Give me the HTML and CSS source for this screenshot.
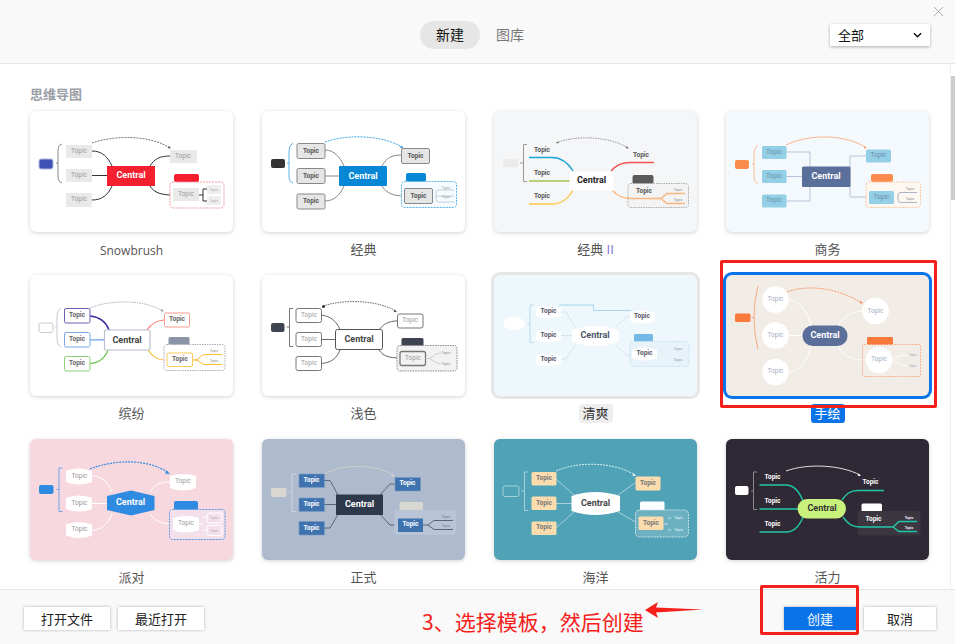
FILE: index.html
```html
<!DOCTYPE html>
<html lang="zh-CN">
<head>
    <meta charset="UTF-8">
    <title>新建</title>
    <link rel="stylesheet" href="styles.css">
</head>
<body>
<div class="dialog">
    <header class="top-bar">
        <div class="tabs">
            <span class="tab tab-active">新建</span>
            <span class="tab">图库</span>
        </div>
        <div class="filter">全部
            <svg class="chevron" viewBox="0 0 10 6"><path d="M1 1l4 4 4-4" fill="none" stroke="#111" stroke-width="1.6"/></svg>
        </div>
        <svg class="close" viewBox="0 0 9 9"><path d="M0 0l9 9M9 0l-9 9" stroke="#aaa" stroke-width="1"/></svg>
    </header>

    <main class="body">
        <div class="gallery">
            <h2 class="section-title">思维导图</h2>
            <div class="grid">

                <!-- Snowbrush -->
                <div class="item">
                    <div class="card">
                        <svg viewBox="0 0 203 121">
                            <rect x="9" y="48" width="14" height="10" rx="2" fill="#3f51b5" stroke="#b5bde6"/>
                            <path d="M32 33Q28 34 28 40V65Q28 71 32 72M28 52H26" fill="none" stroke="#888"/>
                            <path d="M62 40C72 40 78 46 82 55M62 64.5H77M62 89C72 89 78 84 82 75M120 55C124 48 130 45 140 45M120 75C124 82 132 84 143 84" fill="none" stroke="#333"/>
                            <path d="M62 32C85 24 120 24 140 37" fill="none" stroke="#777" stroke-dasharray="2 1"/>
                            <path d="M141 37.5l-3.500-.5 1.500-2z" fill="#555"/>
                            <g fill="#e9e9e9"><rect x="36" y="34" width="26" height="13"/><rect x="36" y="58" width="26" height="13"/><rect x="36" y="82" width="26" height="14"/><rect x="140" y="39" width="27" height="13"/></g>
                            <rect x="144" y="63" width="25" height="8" rx="2" fill="#f5202f"/>
                            <rect x="140" y="71" width="54" height="26" rx="3" fill="#fff" stroke="#f59aa3" stroke-dasharray="2 1"/>
                            <rect x="143" y="77" width="26" height="13" fill="#e9e9e9"/>
                            <path d="M169 84H173M173 78V90M173 78H177M173 90H177" fill="none" stroke="#333"/>
                            <g fill="#efefef"><rect x="177" y="74" width="14" height="9"/><rect x="177" y="85" width="14" height="9"/></g>
                            <rect x="77" y="55" width="48" height="20" fill="#f5202f"/>
                            <g class="topic" fill="#999"><text x="49" y="40.5">Topic</text><text x="49" y="65">Topic</text><text x="49" y="89">Topic</text><text x="153" y="46">Topic</text><text x="156" y="84">Topic</text></g>
                            <g class="sub" fill="#aaa"><text x="184" y="79">Topic</text><text x="184" y="90">Topic</text></g>
                            <text class="central" x="101" y="65" fill="#fff">Central</text>
                        </svg>
                    </div>
                    <div class="name name-latin"><span>Snowbrush</span></div>
                </div>

                <!-- classic -->
                <div class="item">
                    <div class="card">
                        <svg viewBox="0 0 203 121">
                            <rect x="9" y="48" width="14" height="9" rx="2" fill="#333"/>
                            <path d="M31 32Q27 34 27 40V65Q27 71 31 72M27 52H25" fill="none" stroke="#5ab4e8"/>
                            <path d="M63 39C72 39 78 46 82 55M63 65H77M63 90C72 90 78 84 82 75M120 55C124 47 130 44 139 44M120 75C124 82 132 85 142 85M170 85H174" fill="none" stroke="#888"/>
                            <path d="M63 31C85 23 120 24 140 36" fill="none" stroke="#3fa9e6" stroke-dasharray="2 1"/>
                            <path d="M141.500 37l-3.500-.2 1.200-2.300z" fill="#1f8fd6"/>
                            <g fill="#e6e6e6" stroke="#888"><rect x="35" y="32.5" width="28" height="15" rx="1.5"/><rect x="35" y="57.5" width="28" height="15" rx="1.5"/><rect x="35" y="83" width="28" height="15" rx="1.5"/><rect x="139.5" y="37.5" width="28" height="15" rx="1.5"/></g>
                            <rect x="144" y="62" width="20" height="9" rx="2" fill="#0787d5"/>
                            <rect x="139.5" y="70.5" width="55" height="26" rx="3" fill="#f5fbff" stroke="#5ab4e8" stroke-dasharray="2 1"/>
                            <rect x="142.5" y="77.5" width="28" height="15" rx="1.5" fill="#e6e6e6" stroke="#888"/>
                            <path d="M192 79H177Q174 79 174 82V88Q174 91 177 91H192M192 85H177Q174 85 174 87" fill="none" stroke="#c5ccd5"/>
                            <rect x="77" y="55" width="48" height="20" rx="1" fill="#0787d5"/>
                            <g class="topic bold" fill="#555"><text x="49" y="40.5">Topic</text><text x="49" y="65.5">Topic</text><text x="49" y="91">Topic</text><text x="153.5" y="45.5">Topic</text><text x="156.5" y="85.5">Topic</text></g>
                            <g class="sub" fill="#999"><text x="184" y="77">Topic</text><text x="184" y="86">Topic</text></g>
                            <text class="central" x="101" y="66" fill="#fff">Central</text>
                        </svg>
                    </div>
                    <div class="name"><span>经典</span></div>
                </div>

                <!-- classic II -->
                <div class="item">
                    <div class="card card-grey">
                        <svg viewBox="0 0 203 121">
                            <rect x="9" y="48" width="15" height="8" rx="1" fill="#ebebeb"/>
                            <path d="M33 33.5H29.5V70.5H33M29.5 52H26" fill="none" stroke="#999"/>
                            <path d="M62 32C82 24 115 25 134 37" fill="none" stroke="#999" stroke-dasharray="1.500 1"/>
                            <path d="M135 37.500l-3.500-.3 1.200-2.200zM62 32l2.500-1.800.3 2z" fill="#777"/>
                            <path d="M35 46.5H58C68 46.5 74 52 79 60" fill="none" stroke="#1ba7d6" stroke-width="1.4"/>
                            <path d="M35 70H76" fill="none" stroke="#9dc44d" stroke-width="1.4"/>
                            <path d="M35 93H58C68 93 74 88 79 79" fill="none" stroke="#fbc84a" stroke-width="1.4"/>
                            <path d="M117 60C122 54 128 51.5 136 51.5H160" fill="none" stroke="#f3514f" stroke-width="1.4"/>
                            <rect x="138.5" y="64" width="21" height="9" rx="2" fill="#5a5a5a"/>
                            <rect x="134" y="72.5" width="60.5" height="24" rx="3" fill="#f3f3f3" stroke="#aaa" stroke-dasharray="1.500 1"/>
                            <path d="M118 79C124 86 130 87.5 138 87.5H167L173 82.5H191M167 87.5L173 92.5H191" fill="none" stroke="#fbb67c" stroke-width="1.4"/>
                            <rect x="75.5" y="60.5" width="44" height="19" fill="#fff"/>
                            <g class="topic bold" fill="#555"><text x="48" y="40">Topic</text><text x="48" y="63">Topic</text><text x="48" y="86">Topic</text><text x="147" y="45">Topic</text><text x="150" y="81">Topic</text></g>
                            <g class="sub" fill="#888"><text x="184" y="79">Topic</text><text x="184" y="89">Topic</text></g>
                            <text class="central" x="97.5" y="70" fill="#222">Central</text>
                        </svg>
                    </div>
                    <div class="name"><span>经典 <i class="two">II</i></span></div>
                </div>

                <!-- business -->
                <div class="item">
                    <div class="card card-ice">
                        <svg viewBox="0 0 203 121">
                            <rect x="9" y="49" width="14" height="9" rx="2" fill="#fa8b4c"/>
                            <path d="M32 34Q28 36 28 42V66Q28 71 32 73M28 53H26" fill="none" stroke="#fbbd95"/>
                            <path d="M60 41H84V56M60 65.5H76M60 90H84V76M124 65V45H140M124 65V86H143M168 86H172" fill="none" stroke="#b8c3d8"/>
                            <path d="M60 34C85 22 120 24 139 36" fill="none" stroke="#fbb48e"/>
                            <circle cx="139" cy="36.500" r="1" fill="#fa8b4c"/>
                            <g fill="#93d0e8"><rect x="36" y="35" width="24.5" height="13" rx="1.5"/><rect x="36" y="59" width="24.5" height="13" rx="1.5"/><rect x="36" y="83.5" width="24.5" height="13" rx="1.5"/><rect x="140" y="38.5" width="25" height="13" rx="1.5"/></g>
                            <rect x="145" y="63" width="22" height="8" rx="2" fill="#fa8b4c"/>
                            <rect x="140" y="71" width="54.5" height="25.5" rx="3" fill="#fdf7f2" stroke="#fbc9a9" stroke-dasharray="2 1"/>
                            <rect x="143" y="80" width="25" height="13" rx="1.5" fill="#93d0e8"/>
                            <path d="M191 81.5H175Q172 81.5 172 84V89Q172 91.5 175 91.5H191" fill="none" stroke="#aab4c6"/>
                            <rect x="76" y="55.5" width="48.5" height="20.5" rx="1.5" fill="#5a6f99"/>
                            <g class="topic" fill="#6d8ba5"><text x="48" y="41.5">Topic</text><text x="48" y="65.5">Topic</text><text x="48" y="90">Topic</text><text x="152.5" y="45">Topic</text><text x="155.5" y="86.5">Topic</text></g>
                            <g class="sub" fill="#888"><text x="184" y="78">Topic</text><text x="184" y="88">Topic</text></g>
                            <text class="central" x="100" y="66" fill="#fff">Central</text>
                        </svg>
                    </div>
                    <div class="name"><span>商务</span></div>
                </div>

                <!-- colourful -->
                <div class="item">
                    <div class="card">
                        <svg viewBox="0 0 203 121">
                            <rect x="9" y="48" width="14" height="9.5" rx="2" fill="#fff" stroke="#c5cad5"/>
                            <path d="M31 33Q27 35 27 41V65Q27 70 31 72M27 52H25" fill="none" stroke="#c5cad5"/>
                            <path d="M60 41C70 42 76 47 79 55" fill="none" stroke="#3a2f9c" stroke-width="1.5"/>
                            <path d="M60 64.8H75" fill="none" stroke="#6ea2ea" stroke-width="1.2"/>
                            <path d="M60 88.5C70 88 75 83 78 75" fill="none" stroke="#6cc551" stroke-width="1.2"/>
                            <path d="M117 55C121 49 126 45.5 134 45" fill="none" stroke="#fb7c70" stroke-width="1.2"/>
                            <path d="M118 75C122 81 127 85 135 85" fill="none" stroke="#fbbd2e" stroke-width="1.2"/>
                            <path d="M60 33C82 24 115 25 133 36" fill="none" stroke="#aab1c0" stroke-dasharray="1.500 1"/>
                            <path d="M134 36.500l-3.500-.3 1.200-2.200z" fill="#8c94a6"/>
                            <g fill="#fff"><rect x="34.5" y="33.5" width="25.5" height="14.5" rx="1.5" stroke="#6b5fb5"/><rect x="34.5" y="57.5" width="25.5" height="14.5" rx="1.5" stroke="#7faae8"/><rect x="34.5" y="81.5" width="25.5" height="14.5" rx="1.5" stroke="#8fd07c"/><rect x="134.5" y="38" width="25" height="14" rx="1.5" stroke="#fb9a90"/></g>
                            <rect x="138.5" y="62" width="21" height="8" rx="1.5" fill="#8a94a6"/>
                            <rect x="134" y="69.5" width="61" height="26" rx="3" fill="#fff" stroke="#aab" stroke-dasharray="1.500 1"/>
                            <rect x="137" y="78" width="25.5" height="13.5" rx="1.5" fill="#fff" stroke="#fbc95a"/>
                            <path d="M162.5 85H165C170 85 170 79.5 175 79.5H192M165 85C170 85 170 89.5 175 89.5H192" fill="none" stroke="#fbbd2e"/>
                            <rect x="74.5" y="55" width="45.5" height="20" rx="1.5" fill="#fff" stroke="#b9c0cf" stroke-width="1.2"/>
                            <g class="topic bold" fill="#666"><text x="47" y="41">Topic</text><text x="47" y="65">Topic</text><text x="47" y="89">Topic</text><text x="147" y="45">Topic</text><text x="150" y="85">Topic</text></g>
                            <g class="sub" fill="#888"><text x="184" y="76">Topic</text><text x="184" y="86">Topic</text></g>
                            <text class="central" x="97" y="65.5" fill="#444">Central</text>
                        </svg>
                    </div>
                    <div class="name"><span>缤纷</span></div>
                </div>

                <!-- light -->
                <div class="item">
                    <div class="card">
                        <svg viewBox="0 0 203 121">
                            <rect x="9" y="48" width="13.5" height="9" rx="2" fill="#3f4550"/>
                            <path d="M31 33.5H27.5V71.5H31M27.5 52H24.5" fill="none" stroke="#777"/>
                            <path d="M59 40C68 41 75 46 78 55M59 64.5H73M59 88.5C69 88 75 83 78 75M117 55C121 49 127 46 135 46M117 75C121 81 127 83 138 83" fill="none" stroke="#666"/>
                            <path d="M61 31C82 24 115 25 134 36" fill="none" stroke="#666" stroke-dasharray="1.500 1"/>
                            <path d="M135 37l-3.500-.3 1.200-2.200z" fill="#444"/>
                            <circle cx="61.5" cy="31.5" r="1.5" fill="#333"/>
                            <g fill="#fff" stroke="#777"><rect x="34" y="33.5" width="25.5" height="14" rx="2"/><rect x="34" y="57.5" width="25.5" height="14" rx="2"/><rect x="34" y="81.5" width="25.5" height="14" rx="2"/><rect x="135.5" y="39" width="25.5" height="14" rx="2"/></g>
                            <rect x="139.5" y="63" width="22" height="8" rx="1.5" fill="#3f4550"/>
                            <rect x="135" y="70.5" width="60" height="25.5" rx="3" fill="#f2f2f2" stroke="#888" stroke-dasharray="1.500 1"/>
                            <rect x="138" y="76.5" width="25.5" height="14" rx="2" fill="#f2f2f2" stroke="#777" stroke-width="1.3"/>
                            <path d="M163.5 83.5H166C170 83.5 172 78 179 78M166 83.5C170 83.5 172 88.5 179 88.5" fill="none" stroke="#ccc"/>
                            <rect x="73.5" y="54.5" width="47" height="20" rx="2" fill="#fff" stroke="#555"/>
                            <g class="topic" fill="#999"><text x="47" y="41">Topic</text><text x="47" y="65">Topic</text><text x="47" y="88.5">Topic</text><text x="148" y="46">Topic</text><text x="151" y="84">Topic</text></g>
                            <g class="sub" fill="#888"><text x="184" y="78">Topic</text><text x="184" y="89">Topic</text></g>
                            <text class="central" x="97" y="65" fill="#444">Central</text>
                        </svg>
                    </div>
                    <div class="name"><span>浅色</span></div>
                </div>

                <!-- fresh -->
                <div class="item">
                    <div class="card card-hover">
                        <svg viewBox="0 0 203 121">
                            <ellipse cx="20" cy="48.5" rx="11" ry="6.5" fill="#fff"/>
                            <path d="M40 30H36V67.5H40M36 48.5H33.5" fill="none" stroke="#b5dcf0"/>
                            <path d="M66 37H72L81 52M66 60.5H78M66 84H72L81 70M122 52L132 42H136M122 70L132 80H139M162 79L178 73.5M162 79L178 84.5" fill="none" stroke="#d4e6ec"/>
                            <path d="M65 30H99.5V35.5H137" fill="none" stroke="#a9d6ef"/>
                            <g fill="#fff"><path d="M42 33Q54 28 67 33V41Q54 46 42 41Z"/><path d="M42 57Q54 52 67 57V65Q54 70 42 65Z"/><path d="M42 80.5Q54 75.5 67 80.5V88.5Q54 93.5 42 88.5Z"/><path d="M136 38Q148 33 160.5 38V46Q148 51 136 46Z"/></g>
                            <rect x="140" y="59" width="19" height="8" rx="1.5" fill="#74b9e6"/>
                            <rect x="136" y="66.5" width="59" height="25" rx="3" fill="#e8f3f9" stroke="#c5e3f2" stroke-dasharray="2 1"/>
                            <path d="M138 75Q150 70 163 75V83Q150 88 138 83Z" fill="#fff"/>
                            <path d="M78 55Q101 47 124.5 55V67Q101 75 78 67Z" fill="#fff"/>
                            <g class="topic bold" fill="#556"><text x="54.5" y="37">Topic</text><text x="54.5" y="60.5">Topic</text><text x="54.5" y="84.5">Topic</text><text x="148" y="42">Topic</text><text x="150.5" y="79">Topic</text></g>
                            <g class="sub" fill="#8a9aa8"><text x="184" y="74">Topic</text><text x="184" y="85">Topic</text></g>
                            <text class="central" x="101" y="61" fill="#4a5568">Central</text>
                        </svg>
                    </div>
                    <div class="name"><span class="label-hover">清爽</span></div>
                </div>

                <!-- hand drawn, selected -->
                <div class="item">
                    <div class="card card-selected">
                        <svg viewBox="0 0 203 121">
                            <rect x="9" y="38.5" width="15.5" height="8.5" rx="1.5" fill="#fa7a3c"/>
                            <path d="M32 11Q28 25 28 42Q28 60 32 74M28 42.5H25.5" fill="none" stroke="#f9ab82"/>
                            <g fill="none" stroke="#fff"><path d="M60 25C72 25 82 35 85 51M60 60.5H76M60 97C74 97 82 85 85 71M112 51C116 42 126 36 138 36M112 71C116 79 122 85 140 85M166 85C170 82 175 80 184 80M166 85C170 88 175 91 184 91"/></g>
                            <path d="M61 17C85 8 115 15 136 28" fill="none" stroke="#fa9a6a" stroke-dasharray="2 1"/>
                            <path d="M137 28.500l-3.500-.5 1.300-2z" fill="#fa7a3c"/>
                            <g fill="#fff"><circle cx="49.5" cy="24.5" r="13.3"/><circle cx="49.5" cy="60.5" r="13.3"/><circle cx="49.5" cy="97" r="13.3"/><circle cx="149.5" cy="36" r="13.3"/></g>
                            <rect x="141" y="62" width="26" height="8" rx="1" fill="#fa7a3c"/>
                            <rect x="136.5" y="69.5" width="58" height="32" rx="1.5" fill="none" stroke="#fbb48e" stroke-dasharray="2 1"/>
                            <circle cx="153" cy="85" r="13.3" fill="#fff"/>
                            <rect x="76.5" y="50.5" width="45" height="20.5" rx="10" fill="#5a6f99"/>
                            <g class="topic" fill="#a3adc2"><text x="49.5" y="24.5">Topic</text><text x="49.5" y="60.5">Topic</text><text x="49.5" y="97">Topic</text><text x="149.5" y="36.5">Topic</text><text x="153" y="85">Topic</text></g>
                            <g class="sub" fill="#a3adc2"><text x="186.5" y="80">Topic</text><text x="186.5" y="91">Topic</text></g>
                            <text class="central" x="99" y="61" fill="#fff">Central</text>
                        </svg>
                    </div>
                    <div class="name"><span class="label-selected">手绘</span></div>
                </div>

                <!-- party -->
                <div class="item">
                    <div class="card card-pink">
                        <svg viewBox="0 0 203 121">
                            <rect x="9" y="46" width="14.5" height="9" rx="2" fill="#2f8ae2"/>
                            <path d="M32.5 29H29V72.5H32.5M29 50.5H26.5" fill="none" stroke="#6fa4e4"/>
                            <g fill="none" stroke="#fff"><path d="M62 37C72 37 78 43 82 53M62 64.5H78M62 91C72 91 78 85 82 75M120 53C124 46 130 43 140 43M120 75C124 81 130 85 143 85M169 85H173M173 78V91"/></g>
                            <path d="M60 30C85 20 118 20 137 33" fill="none" stroke="#2f8ae2" stroke-width="1.2" stroke-dasharray="2 1"/>
                            <path d="M140 35l-5-.6 1.800-3z" fill="#2f8ae2"/>
                            <g fill="#fff"><path d="M36 32Q49 27 62 32V43Q49 48 36 43Z"/><path d="M36 59Q49 54 62 59V70Q49 75 36 70Z"/><path d="M36 85.5Q49 80.5 62 85.5V96.5Q49 101.5 36 96.5Z"/><path d="M140 37Q153 33 166 37V49Q153 54 140 49Z"/></g>
                            <rect x="144" y="62" width="24" height="9" rx="2" fill="#2f8ae2"/>
                            <rect x="139.5" y="70.5" width="55.5" height="30" rx="3" fill="#f4e0ea" stroke="#5b96e0" stroke-dasharray="2 1"/>
                            <path d="M143 79Q156 75 169 79V91Q156 96 143 91Z" fill="#fff"/>
                            <g fill="none" stroke="#fff"><path d="M169 85H173M173 78H177M173 91H177"/><rect x="177" y="74" width="15" height="10" rx="2"/><rect x="177" y="86.5" width="15" height="10" rx="2"/></g>
                            <path d="M77 57L101 51.5L124.5 57V71L101 76.5L77 71Z" fill="#2f8ae2"/>
                            <g class="topic" fill="#999"><text x="49.5" y="37.5">Topic</text><text x="49.5" y="64.5">Topic</text><text x="49.5" y="91">Topic</text><text x="153" y="43">Topic</text><text x="156" y="85">Topic</text></g>
                            <g class="sub" fill="#aaa"><text x="184" y="79">Topic</text><text x="184" y="91.5">Topic</text></g>
                            <text class="central" x="100.5" y="64" fill="#fff">Central</text>
                        </svg>
                    </div>
                    <div class="name"><span>派对</span></div>
                </div>

                <!-- formal -->
                <div class="item">
                    <div class="card card-slate">
                        <svg viewBox="0 0 203 121">
                            <rect x="9" y="49" width="15.5" height="9" rx="2" fill="#d8d8d0"/>
                            <path d="M34 35H30V72.5H34M30 53H27.5" fill="none" stroke="#cfd5df"/>
                            <g fill="none" stroke="#5a6678"><path d="M62 41.5H68L76 56M62 65.5H74M62 89H68L76 75.5M118 56L128 45H133M118 75.5L128 86H136"/></g>
                            <path d="M62 35C82 24 115 25 132 37" fill="none" stroke="#cfcfc8"/>
                            <path d="M133 37.500l-3.500-.3 1.200-2.200z" fill="#d8d8d0"/>
                            <g fill="#3f73b0" stroke="#7d99bf" stroke-width=".5"><rect x="37" y="35" width="25.5" height="13.5"/><rect x="37" y="59" width="25.5" height="13.5"/><rect x="37" y="82.5" width="25.5" height="13.5"/><rect x="133" y="38.5" width="25.5" height="13.5"/></g>
                            <rect x="137.5" y="63" width="23.5" height="8.5" rx="1.5" fill="#d8d8d0"/>
                            <rect x="132.5" y="71" width="61.5" height="25" rx="3" fill="#b9c4d6"/>
                            <rect x="136" y="79.5" width="25" height="13.5" fill="#3f73b0"/>
                            <path d="M161 86H166L172 81.5H191M166 86L172 90.5H191" fill="none" stroke="#5a6678"/>
                            <rect x="74" y="55.5" width="47" height="20.5" fill="#2e3a4c"/>
                            <g class="topic bold" fill="#fff"><text x="49.5" y="42">Topic</text><text x="49.5" y="65.5">Topic</text><text x="49.5" y="89.5">Topic</text><text x="145.5" y="45">Topic</text><text x="148.5" y="86">Topic</text></g>
                            <g class="sub" fill="#6b7688"><text x="184" y="77.5">Topic</text><text x="184" y="86.5">Topic</text></g>
                            <text class="central" x="97.5" y="66" fill="#fff">Central</text>
                        </svg>
                    </div>
                    <div class="name"><span>正式</span></div>
                </div>

                <!-- ocean -->
                <div class="item">
                    <div class="card card-teal">
                        <svg viewBox="0 0 203 121">
                            <rect x="9" y="47" width="16" height="10.5" rx="2" fill="none" stroke="#a7d0da"/>
                            <path d="M34 33H30.5V71.5H34M30.5 52H27.5" fill="none" stroke="#a7d0da"/>
                            <g fill="none" stroke="#a7d0da"><path d="M62 40L80 56M62 64.5H78M62 89L80 73M124 56L141 44M124 73L145 85M170 85H174M174 79V90"/></g>
                            <path d="M62 32C85 22 120 23 141 36" fill="none" stroke="#d9eef3" stroke-dasharray="2 1"/>
                            <path d="M142 37l-3.500-.3 1.200-2.200z" fill="#fff"/>
                            <g fill="#fbdcae"><rect x="37.5" y="33" width="25" height="13.5" rx="1.5"/><rect x="37.5" y="57.5" width="25" height="13.5" rx="1.5"/><rect x="37.5" y="82.5" width="25" height="13.5" rx="1.5"/><rect x="141.5" y="37.5" width="25" height="14" rx="1.5"/></g>
                            <rect x="146" y="62.5" width="24.5" height="9" rx="1.5" fill="#fff"/>
                            <rect x="141.5" y="71" width="53" height="27" rx="4" fill="#6db1c1" stroke="#c7e3ea" stroke-dasharray="2 1"/>
                            <rect x="144.5" y="77.5" width="25" height="13.5" rx="1.5" fill="#fbdcae"/>
                            <path d="M169.5 85H174M174 80Q174 79 177 79M174 90Q174 91 177 91" fill="none" stroke="#c7e3ea"/>
                            <path d="M77.5 57Q101 49 126 57V72Q101 80 77.5 72Z" fill="#fff"/>
                            <g class="topic bold" fill="#777"><text x="50" y="40">Topic</text><text x="50" y="64.5">Topic</text><text x="50" y="89">Topic</text><text x="154" y="44.5">Topic</text><text x="157" y="84.5">Topic</text></g>
                            <g class="sub" fill="#e8f6f8"><text x="184.5" y="79">Topic</text><text x="184.5" y="90.5">Topic</text></g>
                            <text class="central" x="101.5" y="65" fill="#444">Central</text>
                        </svg>
                    </div>
                    <div class="name"><span>海洋</span></div>
                </div>

                <!-- vitality -->
                <div class="item">
                    <div class="card card-dark">
                        <svg viewBox="0 0 203 121">
                            <rect x="9" y="47" width="13.5" height="9" rx="2" fill="#fff"/>
                            <path d="M31 33H27.5V70.5H31M27.5 52H25" fill="none" stroke="#888"/>
                            <path d="M60 32C82 24 115 26 134 36" fill="none" stroke="#ddd"/>
                            <path d="M135 37l-3.500-.3 1.200-2.200z" fill="#fff"/>
                            <rect x="135.5" y="64.5" width="20.5" height="8" rx="1.5" fill="#fff"/>
                            <rect x="131.5" y="72" width="63" height="24.5" rx="3" fill="#3b3640"/>
                            <g fill="none" stroke="#1fc7a8" stroke-width="1.4"><path d="M33.5 46H60C68 46 73 52 77 62M33.5 70H72M33.5 93H60C68 93 73 88 77 78M116 61C120 55 124 51.5 132 51.5H158M117 78C122 85 126 88 134 88H167L173 82.5H191M167 88L173 92.5H191"/></g>
                            <rect x="71.5" y="60" width="48.5" height="19.5" rx="9.7" fill="#c9f27c"/>
                            <g class="topic bold" fill="#fff"><text x="46.5" y="39">Topic</text><text x="46.5" y="63">Topic</text><text x="46.5" y="86">Topic</text><text x="144.5" y="44">Topic</text><text x="147.5" y="81">Topic</text></g>
                            <g class="sub bold" fill="#eee"><text x="183" y="78.5">Topic</text><text x="183" y="88.5">Topic</text></g>
                            <text class="central" x="96" y="69.5" fill="#333">Central</text>
                        </svg>
                    </div>
                    <div class="name"><span>活力</span></div>
                </div>

            </div>
        </div>
        <div class="scrollbar"><div class="thumb"></div></div>
    </main>

    <footer class="bottom-bar">
        <div class="actions">
            <button class="btn">打开文件</button>
            <button class="btn">最近打开</button>
        </div>
        <div class="actions actions-right">
            <button class="btn btn-primary">创建</button>
            <button class="btn">取消</button>
        </div>
    </footer>

    <!-- red marks drawn over the screenshot -->
    <div class="mark mark-card"></div>
    <div class="mark mark-create"></div>
    <div class="mark-text">3、选择模板，然后创建</div>
    <svg class="mark-arrow" viewBox="0 0 58 18"><path d="M0 9L13 1L11 6.5L58 8.5L11 11.5L13 17Z" fill="#f5201a"/></svg>
</div>
</body>
</html>
```

FILE: styles.css
```css
* {box-sizing: border-box;}
html, body {margin: 0; padding: 0;}
body {font-family: "Open Sans", "Noto Sans CJK SC", sans-serif; background: #fff;}

.dialog {position: relative; width: 955px; height: 644px; display: flex; flex-direction: column; overflow: hidden;}

.top-bar {position: relative; height: 64px; flex: none; padding-top: 21px; background: #f9f9f9; border-bottom: 1px solid #e6e6e6;}
.tabs {display: flex; padding-left: 420px;}
.tab {height: 28px; line-height: 27px; width: 60px; text-align: center; font-size: 14px; color: #777; border-radius: 14px; font-family: "Noto Sans CJK SC", sans-serif;}
.tab-active {background: #e6e6e6; color: #111;}
.filter {position: absolute; left: 830px; top: 24px; width: 100px; height: 22px; line-height: 21px; padding-left: 8px; font-size: 13px; color: #111; background: #fff; box-shadow: 0 1px 3px rgba(0,0,0,.3); font-family: "Noto Sans CJK SC", sans-serif;}
.chevron {position: absolute; right: 8px; top: 8px; width: 9px; height: 6px;}
.close {position: absolute; left: 934px; top: 7px; width: 9px; height: 9px;}

.body {flex: 1; display: flex; min-height: 0; overflow: hidden;}
.gallery {flex: 1; padding: 22px 0 0 30px;}
.section-title {margin: 0 0 9px; font-size: 13px; line-height: 16px; font-weight: 700; color: #9a9ea6; font-family: "Noto Sans CJK SC", sans-serif;}
.grid {display: grid; grid-template-columns: repeat(4, 203px); column-gap: 29px; grid-auto-rows: 164px;}

.card {width: 203px; height: 121px; background: #fff; border-radius: 6px; box-shadow: 0 1px 4px rgba(0,0,0,.18); overflow: hidden;}
.card svg {display: block; width: 203px; height: 121px;}
.card-grey {background: #f5f6f8;}
.card-ice {background: #f4f9fd;}
.card-hover {background: #eef7fb; box-shadow: 0 0 0 3px #e6e6e6;}
.card-selected {background: #f1ece6; box-shadow: 0 0 0 3px #0b73e8;}
.card-pink {background: #f8d8df;}
.card-slate {background: #aebacd;}
.card-teal {background: #50a3b6;}
.card-dark {background: #2f2935;}

.topic text, .sub text, .central {text-anchor: middle; dominant-baseline: central; font-family: Roboto, sans-serif;}
.topic text, .central {transform: translateY(-.7px);}
.topic text {font-size: 6.5px;}
.topic.bold text {font-weight: 700;}
.sub text {font-size: 3.5px;}
.sub.bold text {font-weight: 700;}
.central {font-size: 9px; font-weight: 700;}

.name {height: 43px; padding-top: 8px; text-align: center; font-size: 13px; line-height: 19px; color: #555;}
.name-latin {font-size: 12px; padding-top: 9px;}
.name span {display: inline-block; min-width: 34px; height: 19px; border-radius: 3px;}
.two {font-style: normal; color: #7a70c8;}
.label-hover {background: #eee; color: #333;}
.label-selected {background: #0b73e8; color: #fff;}

.scrollbar {position: relative; width: 5px; flex: none; padding-top: 12px; background: #fff; border-left: 1px solid #eee;}
.thumb {height: 124px; background: #cdcdcd;}

.bottom-bar {height: 55px; flex: none; display: flex; justify-content: space-between; padding: 17px 19px 0 24px; background: #f9f9f9; border-top: 1px solid #e6e6e6;}
.actions {display: flex; gap: 8px;}
.btn {height: 23px; width: 86px; padding: 0; border: none; background: #fff; color: #222; font-size: 13px; font-family: "Noto Sans CJK SC", sans-serif; box-shadow: 0 0 3px rgba(0,0,0,.28);}
.actions-right .btn {width: 72px;}
.btn-primary {background: #0b73e8; color: #fff;}

.mark {position: absolute; border: 3px solid #f5201a; border-radius: 2px;}
.mark-card {left: 720px; top: 260px; width: 217px; height: 148px;}
.mark-create {left: 760px; top: 585px; width: 99px; height: 50px;}
.mark-text {position: absolute; left: 422px; top: 606px; font-size: 21px; line-height: 30px; color: #f5201a; white-space: nowrap; font-family: "Noto Sans CJK SC", sans-serif;}
.mark-arrow {position: absolute; left: 645px; top: 601px; width: 58px; height: 18px;}
```
